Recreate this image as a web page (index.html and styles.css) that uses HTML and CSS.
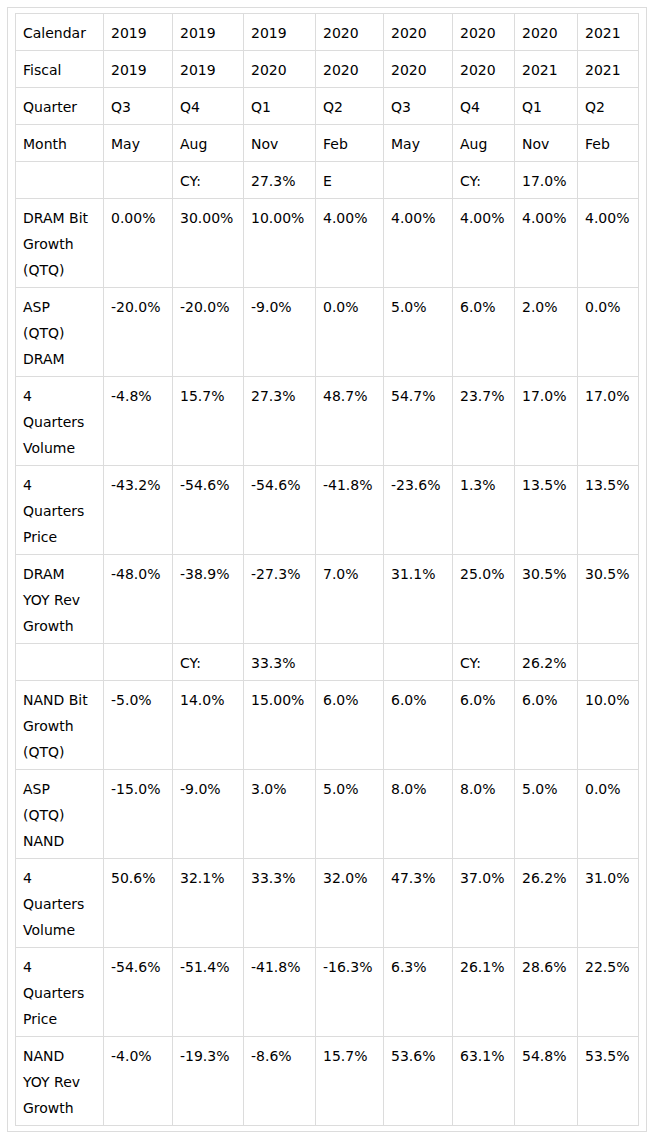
FILE: index.html
```html
<!DOCTYPE html>
<html>
<head>
<meta charset="utf-8">
<link rel="stylesheet" href="styles.css">
</head>
<body>
<div class="frame">
<table class="grid">
<colgroup>
<col class="c0"><col class="c1"><col class="c2"><col class="c3"><col class="c4"><col class="c5"><col class="c6"><col class="c7"><col class="c8">
</colgroup>
<tbody>
<tr><td>Calendar</td><td>2019</td><td>2019</td><td>2019</td><td>2020</td><td>2020</td><td>2020</td><td>2020</td><td>2021</td></tr>
<tr><td>Fiscal</td><td>2019</td><td>2019</td><td>2020</td><td>2020</td><td>2020</td><td>2020</td><td>2021</td><td>2021</td></tr>
<tr><td>Quarter</td><td>Q3</td><td>Q4</td><td>Q1</td><td>Q2</td><td>Q3</td><td>Q4</td><td>Q1</td><td>Q2</td></tr>
<tr><td>Month</td><td>May</td><td>Aug</td><td>Nov</td><td>Feb</td><td>May</td><td>Aug</td><td>Nov</td><td>Feb</td></tr>
<tr><td></td><td></td><td>CY:</td><td>27.3%</td><td>E</td><td></td><td>CY:</td><td>17.0%</td><td></td></tr>
<tr><td>DRAM Bit Growth (QTQ)</td><td>0.00%</td><td>30.00%</td><td>10.00%</td><td>4.00%</td><td>4.00%</td><td>4.00%</td><td>4.00%</td><td>4.00%</td></tr>
<tr><td>ASP<br>(QTQ)<br>DRAM</td><td>-20.0%</td><td>-20.0%</td><td>-9.0%</td><td>0.0%</td><td>5.0%</td><td>6.0%</td><td>2.0%</td><td>0.0%</td></tr>
<tr><td>4<br>Quarters<br>Volume</td><td>-4.8%</td><td>15.7%</td><td>27.3%</td><td>48.7%</td><td>54.7%</td><td>23.7%</td><td>17.0%</td><td>17.0%</td></tr>
<tr><td>4<br>Quarters<br>Price</td><td>-43.2%</td><td>-54.6%</td><td>-54.6%</td><td>-41.8%</td><td>-23.6%</td><td>1.3%</td><td>13.5%</td><td>13.5%</td></tr>
<tr><td>DRAM<br>YOY Rev<br>Growth</td><td>-48.0%</td><td>-38.9%</td><td>-27.3%</td><td>7.0%</td><td>31.1%</td><td>25.0%</td><td>30.5%</td><td>30.5%</td></tr>
<tr><td></td><td></td><td>CY:</td><td>33.3%</td><td></td><td></td><td>CY:</td><td>26.2%</td><td></td></tr>
<tr><td>NAND Bit Growth (QTQ)</td><td>-5.0%</td><td>14.0%</td><td>15.00%</td><td>6.0%</td><td>6.0%</td><td>6.0%</td><td>6.0%</td><td>10.0%</td></tr>
<tr><td>ASP<br>(QTQ)<br>NAND</td><td>-15.0%</td><td>-9.0%</td><td>3.0%</td><td>5.0%</td><td>8.0%</td><td>8.0%</td><td>5.0%</td><td>0.0%</td></tr>
<tr><td>4<br>Quarters<br>Volume</td><td>50.6%</td><td>32.1%</td><td>33.3%</td><td>32.0%</td><td>47.3%</td><td>37.0%</td><td>26.2%</td><td>31.0%</td></tr>
<tr><td>4<br>Quarters<br>Price</td><td>-54.6%</td><td>-51.4%</td><td>-41.8%</td><td>-16.3%</td><td>6.3%</td><td>26.1%</td><td>28.6%</td><td>22.5%</td></tr>
<tr><td>NAND<br>YOY Rev<br>Growth</td><td>-4.0%</td><td>-19.3%</td><td>-8.6%</td><td>15.7%</td><td>53.6%</td><td>63.1%</td><td>54.8%</td><td>53.5%</td></tr>
</tbody>
</table>
</div>
</body>
</html>
```

FILE: styles.css
```css
html, body {
  margin: 0;
  padding: 0;
  background: #fff;
}
body {
  padding: 7px;
  font-family: "DejaVu Sans", Verdana, sans-serif;
  font-size: 14px;
  color: #000;
}
.frame {
  width: 640px;
  box-sizing: border-box;
  border: 1px solid #dcdcdc;
  padding: 5px 7px 5px 7px;
}
.grid {
  border-collapse: collapse;
  table-layout: fixed;
  width: 624px;
}
.grid td {
  border: 1px solid #dcdcdc;
  padding: 6px 6px 4px 7px;
  line-height: 26px;
  vertical-align: top;
  text-align: left;
  white-space: normal;
  overflow: hidden;
}
.c0 { width: 88px; }
.c1 { width: 69px; }
.c2 { width: 71px; }
.c3 { width: 72px; }
.c4 { width: 68px; }
.c5 { width: 69px; }
.c6 { width: 62px; }
.c7 { width: 63px; }
.c8 { width: 61px; }
```
